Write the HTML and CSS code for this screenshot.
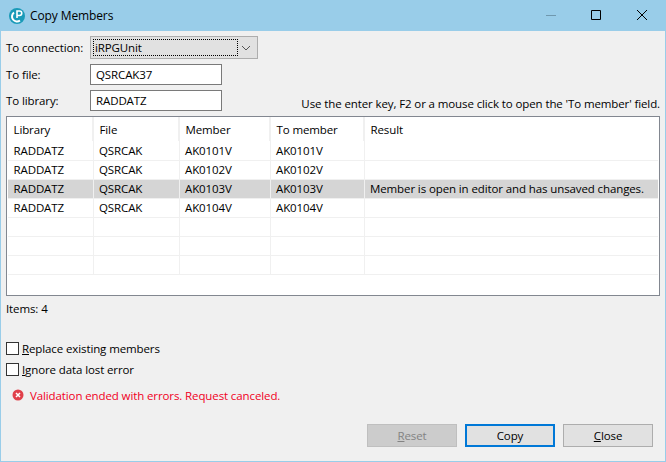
FILE: index.html
```html
<!DOCTYPE html>
<html lang="en">
<head>
    <meta charset="UTF-8">
    <title>Copy Members</title>
    <link rel="stylesheet" href="styles.css">
</head>
<body>
    <div class="window">
        <div class="titlebar">
            <svg class="app-icon" width="16" height="16" viewBox="0 0 16 16">
                <circle cx="8" cy="8" r="8" fill="#1a9ab8"/>
                <path d="M5 4.500a5 5 0 1 0 6 8" fill="none" stroke="#fff" stroke-width="2"/>
                <path d="M8 10V3h2.500a2 2 0 0 1 0 4.500H8" fill="none" stroke="#fff" stroke-width="1.600"/>
            </svg>
            <span class="title">Copy Members</span>
            <div class="controls">
                <svg width="46" height="31" viewBox="0 0 46 31"><path d="M18 15.500h10" stroke="#6f98ae" fill="none"/></svg>
                <svg width="46" height="31" viewBox="0 0 46 31"><path d="M17.500 10.500h9v9h-9z" stroke="#000" fill="none"/></svg>
                <svg width="46" height="31" viewBox="0 0 46 31"><path d="M17 10l10 10M27 10l-10 10" stroke="#000" fill="none"/></svg>
            </div>
        </div>
        <div class="content">
            <div class="form-row first">
                <label class="field-label">To connection:</label>
                <div class="combo">
                    <span class="combo-value"><span class="focus-box">iRPGUnit</span></span>
                    <svg class="combo-arrow" width="10" height="6" viewBox="0 0 10 6"><path d="M1 1l4 4 4-4" stroke="#555" fill="none"/></svg>
                </div>
            </div>
            <div class="form-row">
                <label class="field-label">To file:</label>
                <div class="text-input">QSRCAK37</div>
            </div>
            <div class="form-row last">
                <label class="field-label">To library:</label>
                <div class="text-input">RADDATZ</div>
                <span class="hint">Use the enter key, F2 or a mouse click to open the 'To member' field.</span>
            </div>

            <div class="table-box">
                <table class="members">
                    <colgroup>
                        <col class="col-library">
                        <col class="col-file">
                        <col class="col-member">
                        <col class="col-to">
                        <col>
                    </colgroup>
                    <thead>
                        <tr><th>Library</th><th>File</th><th>Member</th><th>To member</th><th>Result</th></tr>
                    </thead>
                    <tbody>
                        <tr><td>RADDATZ</td><td>QSRCAK</td><td>AK0101V</td><td>AK0101V</td><td></td></tr>
                        <tr><td>RADDATZ</td><td>QSRCAK</td><td>AK0102V</td><td>AK0102V</td><td></td></tr>
                        <tr class="selected"><td>RADDATZ</td><td>QSRCAK</td><td>AK0103V</td><td>AK0103V</td><td>Member is open in editor and has unsaved changes.</td></tr>
                        <tr><td>RADDATZ</td><td>QSRCAK</td><td>AK0104V</td><td>AK0104V</td><td></td></tr>
                        <tr><td></td><td></td><td></td><td></td><td></td></tr>
                        <tr><td></td><td></td><td></td><td></td><td></td></tr>
                        <tr><td></td><td></td><td></td><td></td><td></td></tr>
                    </tbody>
                </table>
            </div>

            <div class="items">Items: 4</div>

            <div class="check-row first-check">
                <span class="checkbox"></span>
                <span><u>R</u>eplace existing members</span>
            </div>
            <div class="check-row">
                <span class="checkbox"></span>
                <span><u>I</u>gnore data lost error</span>
            </div>

            <div class="error">
                <svg width="12" height="12" viewBox="0 0 12 12">
                    <circle cx="6" cy="6" r="5.500" fill="#e0404a"/>
                    <path d="M4 4l4 4M8 4l-4 4" stroke="#fff" stroke-width="1.500" fill="none"/>
                </svg>
                <span>Validation ended with errors. Request canceled.</span>
            </div>

            <div class="buttons">
                <button type="button" class="btn" disabled><u>R</u>eset</button>
                <button type="button" class="btn default">Copy</button>
                <button type="button" class="btn"><u>C</u>lose</button>
            </div>
        </div>
    </div>
</body>
</html>
```

FILE: styles.css
```css
* {
    box-sizing: border-box;
}
html, body {
    margin: 0;
    padding: 0;
}
body {
    width: 666px;
    height: 462px;
    overflow: hidden;
    font-family: "Open Sans", "Noto Sans", sans-serif;
    font-size: 11.5px;
    letter-spacing: -0.11px;
    color: #000;
    background-color: #f0f0f0;
}
.window {
    width: 666px;
    height: 462px;
    border: 1px solid #99cde9;
    border-top: none;
    display: flex;
    flex-direction: column;
}
.titlebar {
    height: 31px;
    margin: 0 -1px;
    background-color: #99cde9;
    display: flex;
    align-items: center;
    padding-left: 9px;
    flex-shrink: 0;
}
.app-icon {
    margin-right: 5px;
}
.title {
    font-size: 12px;
    color: #000;
}
.controls {
    margin-left: auto;
    display: flex;
}
.controls svg {
    display: block;
}
.content {
    flex: 1;
    padding: 5px 5px 0;
    display: flex;
    flex-direction: column;
}
.form-row {
    display: flex;
    align-items: center;
    height: 21px;
    margin-bottom: 5px;
}
.form-row.first {
    height: 23px;
    margin-bottom: 5px;
}
.form-row.last {
    margin-bottom: 5px;
}
.field-label {
    width: 84px;
    flex-shrink: 0;
}
.combo {
    width: 168px;
    height: 23px;
    background-color: #e1e1e1;
    border: 1px solid #adadad;
    display: flex;
    align-items: center;
    padding: 2px;
}
.combo-value {
    flex: 1;
    height: 100%;
}
.focus-box {
    display: flex;
    align-items: center;
    width: 145px;
    height: 100%;
    padding-left: 1px;
    border: 1px dotted #000;
}
.combo-arrow {
    margin: 0 4px 0 0;
}
.text-input {
    width: 132px;
    height: 21px;
    background-color: #fff;
    border: 1px solid #7a7a7a;
    display: flex;
    align-items: center;
    padding-left: 5px;
}
.hint {
    margin-left: auto;
    align-self: flex-end;
    line-height: 15px;
}
.table-box {
    height: 180px;
    background-color: #fff;
    border: 1px solid #828790;
    padding: 0 1px;
    overflow: hidden;
}
.members {
    width: 100%;
    table-layout: fixed;
    border-collapse: collapse;
}
.col-library {
    width: 85px;
}
.col-file {
    width: 86px;
}
.col-member {
    width: 91px;
}
.col-to {
    width: 94px;
}
.members th {
    height: 24px;
    font-weight: normal;
    text-align: left;
    padding: 0 0 0 5.5px;
    border-right: 2px solid #f0f0f0;
}
.members th:last-child {
    border-right: none;
}
.members td {
    height: 19px;
    padding: 0 0 0 5.5px;
    white-space: nowrap;
    border-right: 1px solid #f0f0f0;
    border-bottom: 1px solid #f0f0f0;
}
.members td:last-child {
    border-right: none;
}
.members .selected td {
    background-color: #d5d5d5;
    border-right-color: #f0f0f0;
}
.items {
    margin-top: 5px;
    line-height: 16px;
}
.check-row {
    display: flex;
    align-items: center;
    gap: 3px;
    height: 13px;
    margin-top: 8px;
}
.first-check {
    margin-top: 25px;
}
.checkbox {
    width: 13px;
    height: 13px;
    background-color: #fff;
    border: 1px solid #333;
    flex-shrink: 0;
}
.error {
    display: flex;
    align-items: center;
    gap: 6px;
    margin-top: 12px;
    margin-left: 6px;
    height: 14px;
    color: #f0001e;
}
.buttons {
    display: flex;
    justify-content: flex-end;
    gap: 8px;
    margin-top: 22px;
    padding-right: 7px;
}
.btn {
    width: 90px;
    height: 23px;
    padding: 0;
    font: inherit;
    letter-spacing: inherit;
    color: #000;
    background-color: #e1e1e1;
    border: 1px solid #adadad;
}
.btn:disabled {
    color: #838383;
    background-color: #cccccc;
    border-color: #bfbfbf;
}
.btn.default {
    border: 2px solid #0078d7;
}
```
